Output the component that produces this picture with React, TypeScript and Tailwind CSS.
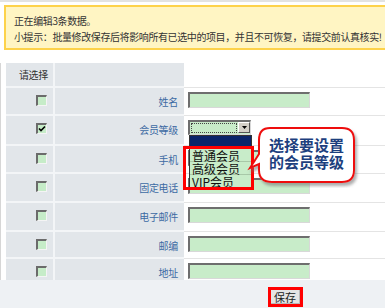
import React from 'react';

type Row = { label: string; h: string; kind: 'input' | 'select'; checked?: boolean };

const rows: Row[] = [
  { label: '姓名', h: 'h-[28px]', kind: 'input' },
  { label: '会员等级', h: 'h-[30px]', kind: 'select', checked: true },
  { label: '手机', h: 'h-[28px]', kind: 'input' },
  { label: '固定电话', h: 'h-[29px]', kind: 'input' },
  { label: '电子邮件', h: 'h-[29px]', kind: 'input' },
  { label: '邮编', h: 'h-[27px]', kind: 'input' },
  { label: '地址', h: 'h-[29px]', kind: 'input' },
];

function Checkbox({ checked }: { checked?: boolean }) {
  return (
    <span className="relative block w-[11px] h-[11px] bg-[#c6ecc8] border-t-2 border-l-2 border-t-[#6b6b6b] border-l-[#6b6b6b] border-b border-r border-b-[#f4f4f4] border-r-[#f4f4f4]">
      {checked && (
        <svg className="absolute left-0 top-0" width="8" height="8" viewBox="0 0 8 8">
          <polyline points="1,3.5 3,5.5 7,1.5" fill="none" stroke="#000" strokeWidth="1.6" />
        </svg>
      )}
    </span>
  );
}

function TextInput() {
  return (
    <div className="w-[122px] h-[16px] bg-[#c8ecc9] border-t-2 border-l-2 border-t-[#6e6e6e] border-l-[#6e6e6e] border-b border-r border-b-[#d8d8d8] border-r-[#d8d8d8]" />
  );
}

function SelectBox() {
  return (
    <div className="flex w-[63px] h-[15px] bg-[#c8ecc9] border-t-2 border-l-2 border-t-[#6e6e6e] border-l-[#6e6e6e] border-b border-r border-b-[#d8d8d8] border-r-[#d8d8d8]">
      <div className="flex-1 m-[1px] border border-dotted border-[#444]" />
      <div className="w-[12px] h-[11px] bg-[#d4d0c8] border-t border-l border-t-white border-l-white border-b border-r border-b-[#555] border-r-[#555] flex items-center justify-center">
        <svg width="5" height="3" viewBox="0 0 5 3">
          <polygon points="0,0 5,0 2.5,3" fill="#000" />
        </svg>
      </div>
    </div>
  );
}

export default function App() {
  return (
    <div className="relative w-[385px] h-[308px] overflow-hidden bg-white font-['Noto_Sans_CJK_SC',sans-serif]">
      <div className="h-[2px] bg-[#e2e2e2]" />
      <div className="mt-[3px] ml-[4px] w-[384px] h-[45px] border-2 border-[#fdd24a] bg-[#fff5c3] pl-[8px] pt-[7px] text-[10px] leading-[14px] tracking-[-0.4px] text-[#333] whitespace-nowrap">
        <div>正在编辑3条数据。</div>
        <div className="mt-[2px]">小提示：批量修改保存后将影响所有已选中的项目，并且不可恢复，请提交前认真核实!</div>
      </div>

      <div className="mt-[13px] h-[217px] overflow-hidden border-l border-[#d6d6d6] pl-[5px]">
        <div className="flex h-[25px]">
          <div className="w-[47px] shrink-0 bg-[#e2e6ea] border-b-2 border-[#f3f5f7] text-right pr-[5px] pt-[5px] text-[10px] leading-[14px] tracking-[-0.3px] text-[#333]">
            请选择
          </div>
          <div className="w-[2px] shrink-0 bg-[#f3f5f7]" />
          <div className="w-[129px] shrink-0 bg-[#e2e6ea] border-b-2 border-[#f3f5f7]" />
          <div className="flex-1 border-b border-[#e4e4e4]" />
        </div>
        {rows.map((r) => (
          <div key={r.label} className={`flex ${r.h}`}>
            <div className="w-[47px] shrink-0 bg-[#e2e6ea] border-b-2 border-[#f3f5f7] flex justify-end pr-[6px] pt-[7px]">
              <Checkbox checked={r.checked} />
            </div>
            <div className="w-[2px] shrink-0 bg-[#f3f5f7]" />
            <div className="w-[129px] shrink-0 bg-[#e2e6ea] border-b-2 border-[#f3f5f7] text-right pr-[6px] pt-[8px] text-[10px] leading-[12px] tracking-[-0.3px] text-[#3d6aa3]">
              {r.label}
            </div>
            <div className="flex-1 border-b border-[#e4e4e4] pl-[4px] pt-[4px]">
              {r.kind === 'input' ? <TextInput /> : <SelectBox />}
            </div>
          </div>
        ))}
      </div>

      <div className="h-[28px] bg-[#eef1f4] pl-[268px] pt-[7px]">
        <div className="w-[35px] h-[20px] border-[3px] border-[#ff0000]">
          <div className="h-full bg-[#e4e4e4] border-b border-r border-[#b8b8b8] flex items-center justify-center text-[11px] leading-[12px] text-[#222]">
            保存
          </div>
        </div>
      </div>

      {/* open dropdown list */}
      <div className="absolute left-[189px] top-[135px] w-[63px] border border-[#333] bg-[#c8ecc9] text-[12px] leading-[13px] text-[#111]">
        <div className="h-[13px] bg-[#0a246a]" />
        <div className="h-[13px] pl-[2px] border-b border-[#a8c8a8] whitespace-nowrap">普通会员</div>
        <div className="h-[13px] pl-[2px] border-b border-[#a8c8a8] whitespace-nowrap">高级会员</div>
        <div className="h-[13px] pl-[2px] whitespace-nowrap">VIP会员</div>
      </div>

      {/* red highlight box */}
      <div className="absolute left-[183px] top-[146px] w-[71px] h-[44px] border-[3px] border-[#ff0000]" />

      {/* callout bubble */}
      <svg className="absolute left-[246px] top-[124px]" width="114" height="64" viewBox="0 0 114 64">
        <defs>
          <filter id="sh" x="-10%" y="-10%" width="130%" height="140%">
            <feDropShadow dx="2" dy="3" stdDeviation="1.5" floodColor="#777" floodOpacity="0.6" />
          </filter>
        </defs>
        <path
          d="M 24 4 H 96 Q 108 4 108 16 V 46 Q 108 58 96 58 H 26 Q 13 58 13 46 V 40 L 4 44 L 13 30 V 16 Q 13 4 24 4 Z"
          fill="#fff"
          stroke="#ee1111"
          strokeWidth="2"
          filter="url(#sh)"
        />
      </svg>
      <div className="absolute left-[259px] top-[136px] w-[95px] text-center text-[15px] leading-[17px] font-bold text-[#1d3f7e]">
        <div>选择要设置</div>
        <div>的会员等级</div>
      </div>
    </div>
  );
}
